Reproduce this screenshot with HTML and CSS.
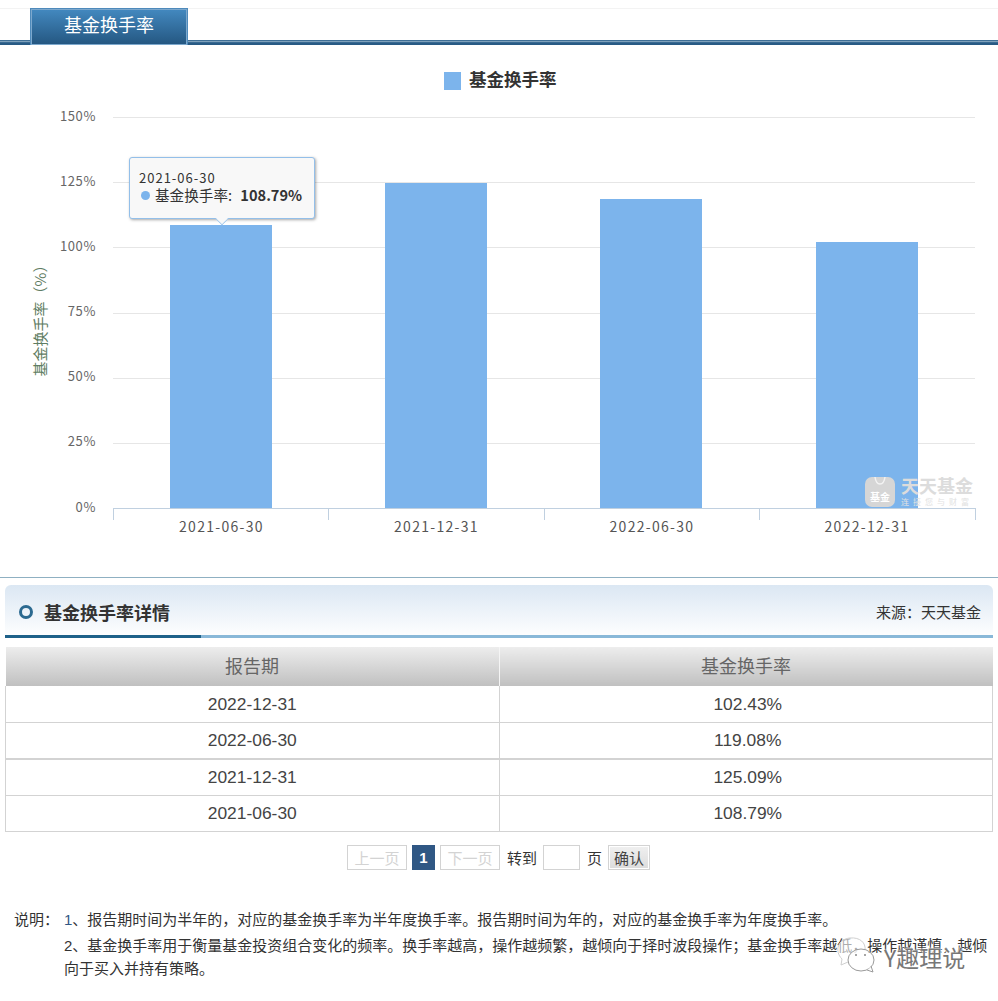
FILE: index.html
```html
<!DOCTYPE html>
<html lang="zh">
<head>
<meta charset="utf-8">
<title>基金换手率</title>
<link rel="stylesheet" href="styles.css">
</head>
<body>
<div class="page">
  <header class="tabbar">
    <div class="tab">基金换手率</div>
  </header>

  <section class="chart">
    <svg class="chart-svg" width="998" height="532" viewBox="0 45 998 532">
      <rect class="bar" x="444" y="72" width="17" height="18"/>
      <text class="legend" x="469" y="86">基金换手率</text>

      <g class="grid">
        <line x1="113" x2="975" y1="117.5" y2="117.5"/>
        <line x1="113" x2="975" y1="182.5" y2="182.5"/>
        <line x1="113" x2="975" y1="247.5" y2="247.5"/>
        <line x1="113" x2="975" y1="313.5" y2="313.5"/>
        <line x1="113" x2="975" y1="378.5" y2="378.5"/>
        <line x1="113" x2="975" y1="443.5" y2="443.5"/>
      </g>

      <g class="ylabels">
        <text x="96" y="121">150%</text>
        <text x="96" y="186">125%</text>
        <text x="96" y="251">100%</text>
        <text x="96" y="316">75%</text>
        <text x="96" y="381">50%</text>
        <text x="96" y="446">25%</text>
        <text x="96" y="512">0%</text>
      </g>

      <text class="yname" transform="translate(46 317) rotate(-90)">基金换手率（%）</text>

      <rect class="bar" x="170" y="225" width="102" height="283"/>
      <rect class="bar" x="385" y="183" width="102" height="325"/>
      <rect class="bar" x="600" y="199" width="102" height="309"/>
      <rect class="bar" x="816" y="242" width="102" height="266"/>

      <g class="axis">
        <line x1="113" x2="976" y1="508.5" y2="508.5"/>
        <line x1="113.5" x2="113.5" y1="508" y2="520"/>
        <line x1="328.5" x2="328.5" y1="508" y2="520"/>
        <line x1="544.5" x2="544.5" y1="508" y2="520"/>
        <line x1="759.5" x2="759.5" y1="508" y2="520"/>
        <line x1="975.5" x2="975.5" y1="508" y2="520"/>
      </g>

      <g class="xlabels">
        <text x="221.500" y="532">2021-06-30</text>
        <text x="436.500" y="532">2021-12-31</text>
        <text x="652" y="532">2022-06-30</text>
        <text x="867" y="532">2022-12-31</text>
      </g>

      <g class="watermark">
        <rect x="865" y="477" width="30" height="30" rx="7"/>
        <path class="wm-mark" d="M875 477 q1 7 5 7 q4 0 5 -7"/>
        <text class="wm-small" x="880" y="501">基金</text>
        <text class="wm-big" x="901" y="493">天天基金</text>
        <text class="wm-sub" x="901" y="505">连接您与财富</text>
      </g>
    </svg>
    <div class="tooltip">
      <div class="tip-date">2021-06-30</div>
      <div class="tip-row"><span class="tip-dot"></span>基金换手率: <b>108.79%</b></div>
      <span class="tip-arrow"></span>
    </div>
  </section>

  <section class="detail">
    <div class="detail-head">
      <div class="detail-title"><span class="ring"></span>基金换手率详情</div>
      <div class="source">来源：天天基金</div>
    </div>

    <table class="rates">
      <thead>
        <tr><th>报告期</th><th>基金换手率</th></tr>
      </thead>
      <tbody>
        <tr><td>2022-12-31</td><td>102.43%</td></tr>
        <tr><td>2022-06-30</td><td>119.08%</td></tr>
        <tr class="thick"><td>2021-12-31</td><td>125.09%</td></tr>
        <tr><td>2021-06-30</td><td>108.79%</td></tr>
      </tbody>
    </table>

    <nav class="pager">
      <span class="pg pg-off">上一页</span>
      <span class="pg pg-cur">1</span>
      <span class="pg pg-off">下一页</span>
      <span class="pg-text">转到</span>
      <span class="pg-input"></span>
      <span class="pg-text">页</span>
      <span class="pg-btn">确认</span>
    </nav>

    <div class="notes">
      <div class="note-label">说明：</div>
      <div class="note-body">
        <p class="note-first"><span class="num">1</span>、报告期时间为半年的，对应的基金换手率为半年度换手率。报告期时间为年的，对应的基金换手率为年度换手率。</p>
        <p>2、基金换手率用于衡量基金投资组合变化的频率。换手率越高，操作越频繁，越倾向于择时波段操作；基金换手率越低，操作越谨慎，越倾向于买入并持有策略。</p>
      </div>
    </div>
  </section>

  <div class="stamp">
    <svg width="58" height="38" viewBox="0 0 58 38">
      <path class="st-a" d="M7 22 C-1 14 3 2 15 1 C25 0 31 6 30 13"/>
      <path class="st-a" d="M7 22 L6 28 L13 25"/>
      <ellipse class="st-b" cx="26" cy="23" rx="13" ry="11"/>
      <path class="st-b" d="M32 33 L38 35 L36 29"/>
      <circle class="st-c" cx="21" cy="18" r="1"/>
      <circle class="st-c" cx="30" cy="18" r="1"/>
    </svg>
    <span class="stamp-text">Y趣理说</span>
  </div>
</div>
</body>
</html>
```
FILE: styles.css
```css
* { box-sizing: border-box; }
html, body { margin: 0; padding: 0; background: #fff; }
body { font-family: "Liberation Sans", "Noto Sans CJK SC", sans-serif; color: #333; }
.page { position: relative; width: 998px; height: 1001px; overflow: hidden; }

.tabbar {
  height: 45px;
  padding: 8px 0 0 30px;
  background:
    linear-gradient(#f3f3f3, #f3f3f3) 0 8px / 100% 1px no-repeat,
    linear-gradient(#3f6f96 0 1px, #7fa1bb 1px 2px, #3a6a92 2px 3px, #285a84 3px 5px) 0 100% / 100% 5px no-repeat;
}
.tab {
  width: 158px;
  height: 37px;
  border: 1px solid #4e8abb;
  border-bottom: 0;
  box-shadow: inset 0 0 0 1px #7ca8cd;
  background: linear-gradient(#4389c0, #245680);
  color: #fff;
  font-size: 18px;
  line-height: 35px;
  text-align: center;
}

.chart { position: relative; height: 533px; border-bottom: 1px solid #8fb0c2; }
.chart-svg { display: block; }
.chart-svg text { font-family: "Noto Sans CJK SC", sans-serif; }
.bar { fill: #7cb4ec; }
.legend { font-size: 17.500px; font-weight: 700; fill: #333; }
.grid line { stroke: #e6e6e6; stroke-width: 1; }
.axis line { stroke: #c0d0e0; stroke-width: 1; }
.ylabels text { font-size: 13px; fill: #666; text-anchor: end; letter-spacing: 0.6px; }
.xlabels text { font-size: 14px; fill: #555; text-anchor: middle; letter-spacing: 1.300px; }
.yname { font-size: 15px; fill: #5f7d63; text-anchor: middle; }
.watermark rect { fill: #d6d6d6; }
.wm-mark { fill: none; stroke: #f3f3f3; stroke-width: 1.500; }
.wm-small { font-size: 10px; fill: #fff; text-anchor: middle; font-weight: 700; }
.wm-big { font-size: 18px; fill: #dcdcdc; font-weight: 700; }
.wm-sub { font-size: 8px; fill: #e2e2e2; letter-spacing: 4px; }

.tooltip {
  position: absolute;
  left: 129px;
  top: 112px;
  width: 186px;
  height: 62px;
  padding: 13px 0 0 9px;
  background: #f8f8f8;
  border: 1px solid #93bfe9;
  border-radius: 3px;
  box-shadow: 1px 1px 3px rgba(0, 0, 0, 0.35);
  font-family: "Noto Sans CJK SC", sans-serif;
  color: #333;
}
.tip-date { font-size: 13px; line-height: 14px; letter-spacing: 1px; }
.tip-row { font-size: 14.600px; line-height: 20px; display: flex; align-items: center; white-space: pre; }
.tip-row b { font-weight: 700; margin-left: 5px; }
.tip-dot { width: 9px; height: 9px; border-radius: 50%; background: #7cb4ec; margin: 0 5px 0 2px; }
.tip-arrow {
  position: absolute;
  left: 86px;
  bottom: -7px;
  width: 12px;
  height: 12px;
  background: #f8f8f8;
  border-right: 1px solid #93bfe9;
  border-bottom: 1px solid #93bfe9;
  transform: rotate(45deg) scale(0.75);
}

.detail { padding: 7px 5px 0; }
.detail-head {
  height: 53px;
  display: flex;
  justify-content: space-between;
  align-items: center;
  padding: 0 12px 0 14px;
  border-radius: 6px 6px 0 0;
  background:
    linear-gradient(#1e6189, #1e6189) 0 100% / 196px 3px no-repeat,
    linear-gradient(#89b8d8, #89b8d8) 0 100% / 100% 3px no-repeat,
    linear-gradient(#dbe7f3, #ffffff);
}
.detail-title { display: flex; align-items: center; font-size: 18px; font-weight: 700; color: #333; font-family: "Noto Sans CJK SC", sans-serif; }
.ring { width: 14px; height: 14px; border: 3px solid #2c6a90; border-radius: 50%; margin-right: 11px; }
.source { font-size: 15px; color: #333; }

.rates { width: 988px; margin-top: 9px; border-collapse: collapse; table-layout: fixed; font-size: 17.400px; }
.rates th {
  height: 39px;
  padding: 0 0 3px;
  font-weight: 400;
  font-size: 18px;
  color: #666;
  background: linear-gradient(#ededed, #c0c0c0);
  border-right: 1px solid #f5f5f5;
}
.rates th:last-child { border-right: 0; }
.rates td {
  height: 36.500px;
  padding: 0;
  text-align: center;
  color: #444;
  border: 1px solid #d3d3d3;
  border-top: 0;
}
.rates td:last-child { padding-left: 4px; }
.rates .thick td { border-top: 2px solid #d3d3d3; height: 36px; }

.pager { display: flex; align-items: center; height: 25px; margin-top: 13px; padding-left: 342px; font-size: 15px; }
.pg { height: 25px; display: flex; align-items: center; justify-content: center; }
.pg-off { width: 60px; border: 1px solid #d3d3d3; color: #d3d3d3; }
.pg-cur { width: 23px; margin: 0 5px; background: #2f5784; color: #fff; font-weight: 700; }
.pg-text { margin-left: 7px; color: #333; }
.pg-input { width: 37px; height: 25px; border: 1px solid #d3d3d3; margin-left: 6px; }
.pg-text + .pg-input + .pg-text { margin-left: 7px; }
.pg-btn {
  width: 42px;
  height: 25px;
  margin-left: 6px;
  border: 1px solid #d3d3d3;
  box-shadow: inset 0 0 0 1px #fff;
  background: linear-gradient(#f0f0f0, #dcdcdc);
  color: #444;
  display: flex;
  align-items: center;
  justify-content: center;
}

.notes { display: flex; margin-top: 38px; padding-left: 9px; font-size: 15px; line-height: 23px; color: #333; }
.note-label { width: 50px; flex: none; }
.note-body { width: 928px; }
.note-body p { margin: 0; }
.note-first { margin-bottom: 3px !important; }
.num { color: #2f5784; }

.stamp { position: absolute; left: 835px; top: 937px; display: flex; align-items: flex-start; }
.st-a, .st-b { fill: rgba(255, 255, 255, 0.6); stroke: #cfcfcf; stroke-width: 1; }
.st-b { stroke: #9a9a9a; }
.st-c { fill: #888; }
.stamp-text { font-size: 23px; line-height: 28px; color: #777; font-family: "Noto Sans CJK SC", sans-serif; margin-top: 6px; margin-left: -9px; text-shadow: 0 0 2px #fff, 0 0 2px #fff; }
```
